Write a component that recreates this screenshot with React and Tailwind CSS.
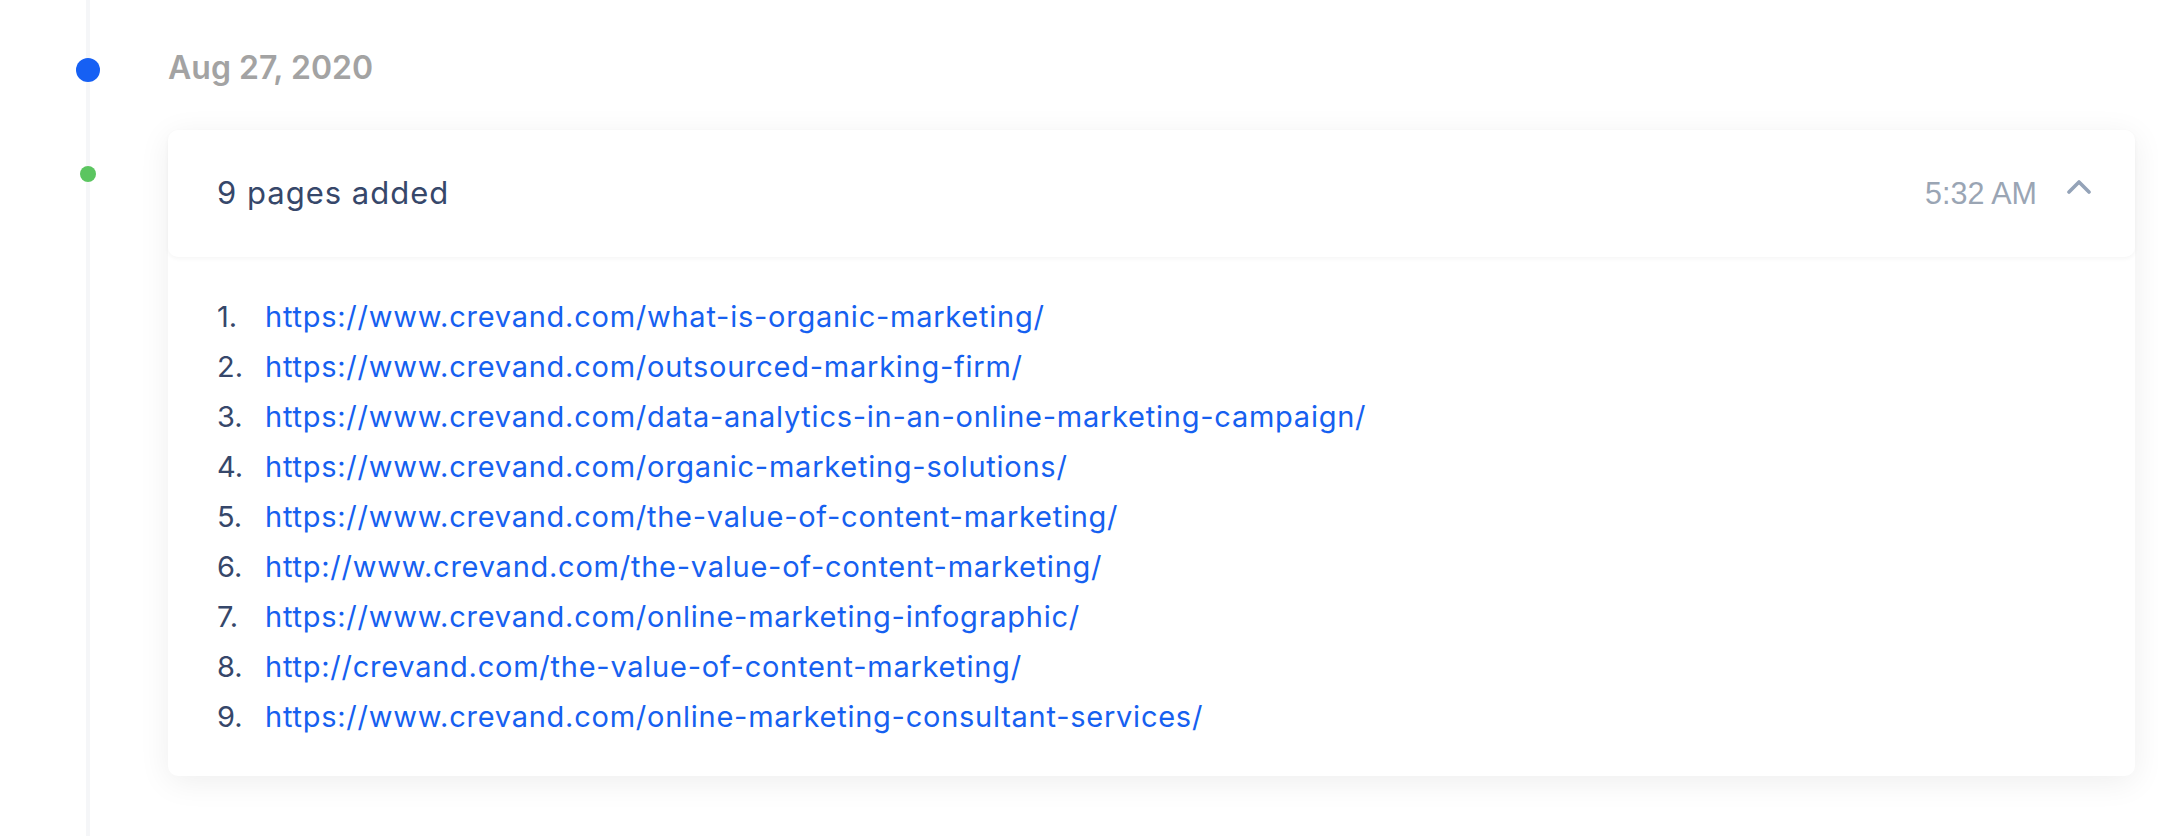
const pages = [
  "https://www.crevand.com/what-is-organic-marketing/",
  "https://www.crevand.com/outsourced-marking-firm/",
  "https://www.crevand.com/data-analytics-in-an-online-marketing-campaign/",
  "https://www.crevand.com/organic-marketing-solutions/",
  "https://www.crevand.com/the-value-of-content-marketing/",
  "http://www.crevand.com/the-value-of-content-marketing/",
  "https://www.crevand.com/online-marketing-infographic/",
  "http://crevand.com/the-value-of-content-marketing/",
  "https://www.crevand.com/online-marketing-consultant-services/",
];

const App = () => {
  return (
    <div className="relative min-h-[836px] bg-white font-['Inter',sans-serif]">
      {/* timeline rail */}
      <div className="absolute left-[86px] top-0 bottom-0 w-[4px] bg-[#f5f6f8]" />

      <div className="relative pt-[58px]">
        {/* Date row */}
        <div className="flex items-center h-[24px]">
          <div className="w-[168px] shrink-0">
            <div className="ml-[76px] w-[24px] h-[24px] rounded-full bg-[#1660f4]" />
          </div>
          <h2 className="text-[32px] font-semibold leading-none text-[#a3a3a3] -mt-[5px]">Aug 27, 2020</h2>
        </div>

        {/* Event row */}
        <div className="flex mt-[48px]">
          <div className="w-[168px] shrink-0 pt-[36px]">
            <div className="ml-[80px] w-[16px] h-[16px] rounded-full bg-[#5bc560]" />
          </div>
          <div className="flex-1 mr-[23px] rounded-[10px] bg-white shadow-[0_6px_32px_rgba(0,0,0,0.07)]">
            <div className="flex items-center h-[127px] pl-[49px] pr-[44px] rounded-[10px] shadow-[0_2px_4px_rgba(0,0,0,0.04)]">
              <span className="flex-1 text-[31px] tracking-[1px] text-[#36476a]">9 pages added</span>
              <span className="font-['Liberation_Sans',sans-serif] text-[30.5px] text-[#9aa5b4]">5:32 AM</span>
              <svg className="ml-[30px] -mt-[14px]" width="24" height="16" viewBox="0 0 24 16" fill="none">
                <polyline points="2,13 12,3 22,13" stroke="#94a3b8" strokeWidth="3.6" strokeLinecap="round" strokeLinejoin="round" />
              </svg>
            </div>
            <ol className="pt-[35px] pb-[34px] pl-[49px]">
              {pages.map((url, i) => (
                <li key={i} className="flex items-center h-[50px] text-[29px]">
                  <span className="w-[48px] text-[#36476a]">{i + 1}.</span>
                  <a href="#" className="tracking-[0.75px] text-[#1660f0]">{url}</a>
                </li>
              ))}
            </ol>
          </div>
        </div>
      </div>
    </div>
  );
};

export default App;
